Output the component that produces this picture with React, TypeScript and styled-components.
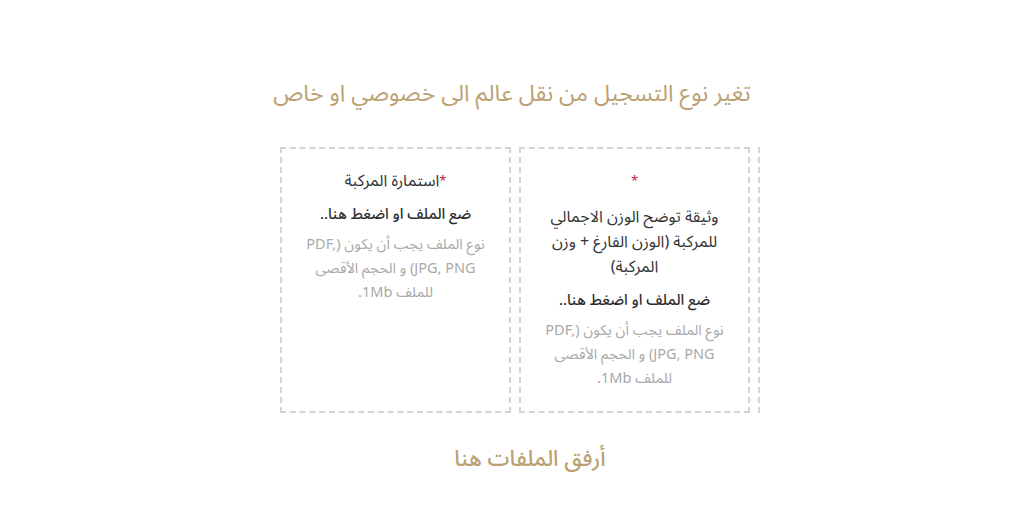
import React from "react";
import styled, { createGlobalStyle } from "styled-components";

const GlobalStyle = createGlobalStyle`
  html, body {
    margin: 0;
    padding: 0;
    background: #ffffff;
  }
  body {
    font-family: "Noto Sans Arabic", "DejaVu Sans", "Noto Sans", sans-serif;
  }
`;

const Page = styled.div`
  direction: rtl;
  display: flex;
  flex-direction: column;
  align-items: center;
  padding-top: 76px;
`;

const Title = styled.h2`
  margin: 0;
  font-size: 23px;
  font-weight: 400;
  line-height: 36px;
  color: #bba172;
`;

const SliderOuter = styled.div`
  width: 496px;
  margin-top: 35px;
  display: flex;
  direction: ltr;
  justify-content: flex-end;
`;

const Slider = styled.div`
  width: 480px;
  overflow: hidden;
`;

const Track = styled.div`
  display: flex;
  gap: 8px;
`;

const Card = styled.div`
  flex: 0 0 auto;
  box-sizing: border-box;
  direction: rtl;
  width: 231px;
  height: 266px;
  border: 2px dashed #d4d4d4;
  padding: 20px 18px;
  text-align: center;
  cursor: pointer;
`;

const Label = styled.div`
  font-size: 16px;
  line-height: 25px;
  color: #333333;
  margin-bottom: 8px;
`;

const Star = styled.span`
  color: #c0243c;
  font-size: 13px;
  vertical-align: top;
`;

const LabelText = styled.span<{ $block?: boolean }>`
  display: inline-block;
  max-width: 100%;
  margin-top: ${(p) => (p.$block ? "11px" : "0")};
`;

const Drop = styled.div`
  font-size: 15px;
  font-weight: 500;
  line-height: 25px;
  color: #2c2c2c;
  margin-bottom: 6px;
`;

const Hint = styled.div`
  font-size: 14.5px;
  line-height: 24px;
  color: #a9a9a9;
`;

const Footer = styled.h3`
  margin: 29px 0 0 36px;
  font-size: 22px;
  font-weight: 500;
  line-height: 34px;
  color: #bba172;
`;

type Doc = { label: string; block?: boolean };

// visual order, left to right; the last card is the next slide, mostly clipped
const docs: Doc[] = [
  { label: "استمارة المركبة" },
  { label: "وثيقة توضح الوزن الاجمالي للمركبة (الوزن الفارغ + وزن المركبة)", block: true },
];

function App() {
  return (
    <>
      <GlobalStyle />
      <Page>
        <Title>تغير نوع التسجيل من نقل عالم الى خصوصي او خاص</Title>
        <SliderOuter>
          <Slider>
            <Track>
              {docs.map((d) => (
                <Card key={d.label}>
                  <Label>
                    <Star>*</Star>
                    <LabelText $block={d.block}>{d.label}</LabelText>
                  </Label>
                  <Drop>ضع الملف او اضغط هنا..</Drop>
                  <Hint>
                    نوع الملف يجب أن يكون (PDF, JPG, PNG) و الحجم الأقصى للملف 1Mb.
                  </Hint>
                </Card>
              ))}
              <Card aria-hidden="true" />
            </Track>
          </Slider>
        </SliderOuter>
        <Footer>أرفق الملفات هنا</Footer>
      </Page>
    </>
  );
}

export default App;
